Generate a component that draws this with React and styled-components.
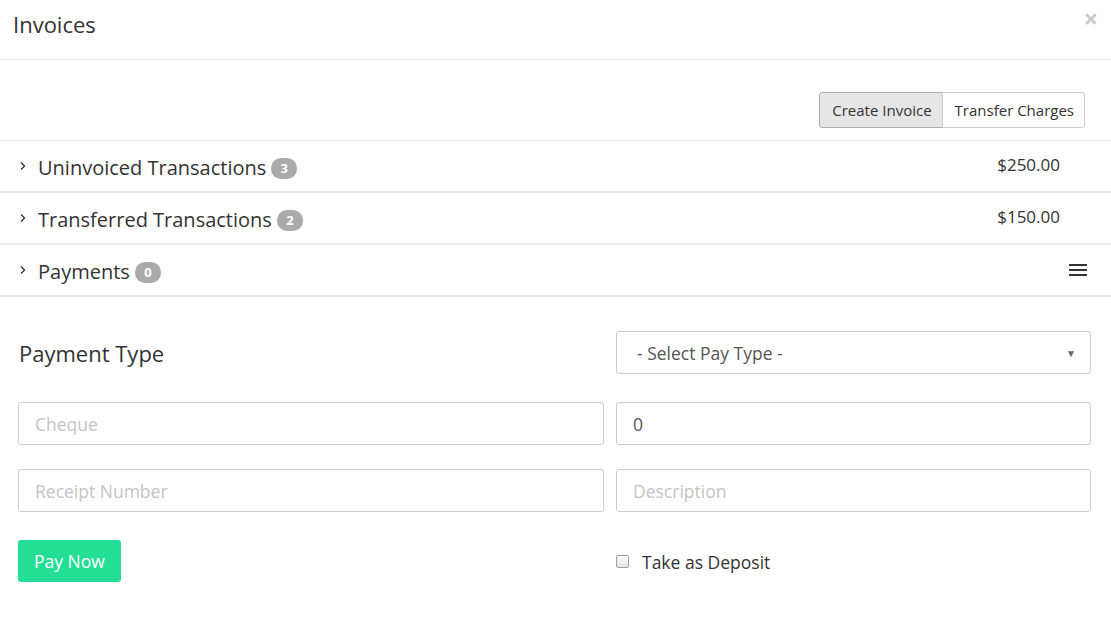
import React from "react";
import styled, { createGlobalStyle } from "styled-components";

const Global = createGlobalStyle`
  html, body { margin: 0; padding: 0; background: #fff; }
  body { font-family: "Open Sans", "Liberation Sans", sans-serif; color: #333; }
  * { box-sizing: border-box; }
`;

const Modal = styled.div`
  width: 1111px;
  min-height: 630px;
  background: #fff;
  display: flex;
  flex-direction: column;
`;

const Header = styled.div`
  height: 60px;
  border-bottom: 1px solid #e5e5e5;
  display: flex;
  align-items: center;
  justify-content: space-between;
  padding: 0 13px 0 13px;
`;

const Title = styled.h4`
  margin: 0;
  font-size: 22px;
  font-weight: 400;
  color: #333;
  margin-top: -12px;
`;

const Close = styled.span`
  font-size: 25px;
  font-weight: 700;
  color: #c8c8c8;
  margin-top: -22px;
  line-height: 1;
`;

const Toolbar = styled.div`
  display: flex;
  justify-content: flex-end;
  padding: 32px 26px 12px 0;
  border-bottom: 1px solid #e8e8e8;
`;

const BtnGroup = styled.div`
  display: flex;
`;

const GroupBtn = styled.button`
  font-family: inherit;
  font-size: 15px;
  height: 36px;
  padding: 0 10px 0 12px;
  color: #333;
  background: ${(p) => (p.$active ? "#e6e6e6" : "#fff")};
  border: 1px solid ${(p) => (p.$active ? "#adadad" : "#ccc")};
  border-radius: ${(p) => (p.$first ? "3px 0 0 3px" : "0 3px 3px 0")};
  margin-left: ${(p) => (p.$first ? "0" : "-1px")};
  cursor: pointer;
`;

const Panel = styled.div`
  height: 52px;
  border-bottom: 2px solid #ebebeb;
  display: flex;
  align-items: center;
  padding: 0 24px 0 19px;
`;

const Chevron = styled.svg`
  width: 8px;
  height: 10px;
  margin-right: 11px;
  margin-top: 0px;
`;

const PanelTitle = styled.span`
  font-size: 20px;
  color: #333;
  flex: 1;
  display: flex;
  align-items: center;
  margin-top: 2px;
`;

const Badge = styled.span`
  display: inline-flex;
  align-items: center;
  justify-content: center;
  background: #aaa;
  color: #fff;
  font-size: 13px;
  font-weight: 700;
  min-width: 26px;
  height: 21px;
  border-radius: 10px;
  margin-left: 5px;
  padding: 0 7px;
  margin-top: 2px;
`;

const Amount = styled.span`
  font-size: 17px;
  color: #333;
  margin-right: 27px;
  margin-top: -4px;
`;

const Hamburger = styled.svg`
  width: 18px;
  height: 13px;
`;

const Form = styled.div`
  display: flex;
  flex-direction: column;
  padding: 34px 20px 0 18px;
`;

const FormRow = styled.div`
  display: grid;
  grid-template-columns: 586px 475px;
  column-gap: 12px;
  margin-top: ${(p) => p.$gap || 0}px;
`;

const Label = styled.div`
  font-size: 22px;
  color: #333;
  display: flex;
  align-items: center;
  padding-left: 1px;
  height: 43px;
`;

const Field = styled.div`
  height: 43px;
  border: 1px solid #ccc;
  border-radius: 3px;
  display: flex;
  align-items: center;
  padding: 0 14px 0 ${(p) => p.$pl || 16}px;
  font-size: 17.5px;
  color: ${(p) => (p.$placeholder ? "#c4c4c4" : "#555")};
  justify-content: space-between;
`;

const Caret = styled.span`
  font-size: 10px;
  color: #666;
`;

const Actions = styled.div`
  display: flex;
  align-items: center;
  height: 42px;
`;

const PayButton = styled.button`
  font-family: inherit;
  height: 42px;
  padding: 0 16px;
  background: #23de95;
  border: none;
  border-radius: 3px;
  color: #fff;
  font-size: 17.5px;
  cursor: pointer;
`;

const CheckRow = styled.label`
  display: flex;
  align-items: center;
  font-size: 17.5px;
  color: #333;
  margin-top: 1px;
`;

const Box = styled.span`
  width: 13px;
  height: 13px;
  border: 1px solid #a0a0a0;
  border-radius: 2px;
  background: linear-gradient(#fdfdfd, #e4e4e4);
  margin-right: 13px;
`;

function ChevronIcon() {
  return (
    <Chevron viewBox="0 0 8 10">
      <path d="M2 1.5 L5.5 5 L2 8.5" fill="none" stroke="#333" strokeWidth="1.4" />
    </Chevron>
  );
}

function Row({ title, count, amount, menu }) {
  return (
    <Panel>
      <ChevronIcon />
      <PanelTitle>
        {title}
        <Badge>{count}</Badge>
      </PanelTitle>
      {amount && <Amount>{amount}</Amount>}
      {menu && (
        <Hamburger viewBox="0 0 18 13">
          <rect x="0" y="0" width="18" height="2" fill="#333" />
          <rect x="0" y="5" width="18" height="2" fill="#333" />
          <rect x="0" y="10" width="18" height="2" fill="#333" />
        </Hamburger>
      )}
    </Panel>
  );
}

export default function App() {
  return (
    <>
      <Global />
      <Modal>
        <Header>
          <Title>Invoices</Title>
          <Close>×</Close>
        </Header>
        <Toolbar>
          <BtnGroup>
            <GroupBtn $active $first>Create Invoice</GroupBtn>
            <GroupBtn>Transfer Charges</GroupBtn>
          </BtnGroup>
        </Toolbar>
        <Row title="Uninvoiced Transactions" count="3" amount="$250.00" />
        <Row title="Transferred Transactions" count="2" amount="$150.00" />
        <Row title="Payments" count="0" menu />
        <Form>
          <FormRow>
            <Label>Payment Type</Label>
            <Field $pl={20}>
              <span>- Select Pay Type -</span>
              <Caret>▼</Caret>
            </Field>
          </FormRow>
          <FormRow $gap={28}>
            <Field $placeholder>Cheque</Field>
            <Field>0</Field>
          </FormRow>
          <FormRow $gap={24}>
            <Field $placeholder>Receipt Number</Field>
            <Field $placeholder>Description</Field>
          </FormRow>
          <FormRow $gap={28}>
            <Actions>
              <PayButton>Pay Now</PayButton>
            </Actions>
            <Actions>
              <CheckRow>
                <Box />
                Take as Deposit
              </CheckRow>
            </Actions>
          </FormRow>
        </Form>
      </Modal>
    </>
  );
}
